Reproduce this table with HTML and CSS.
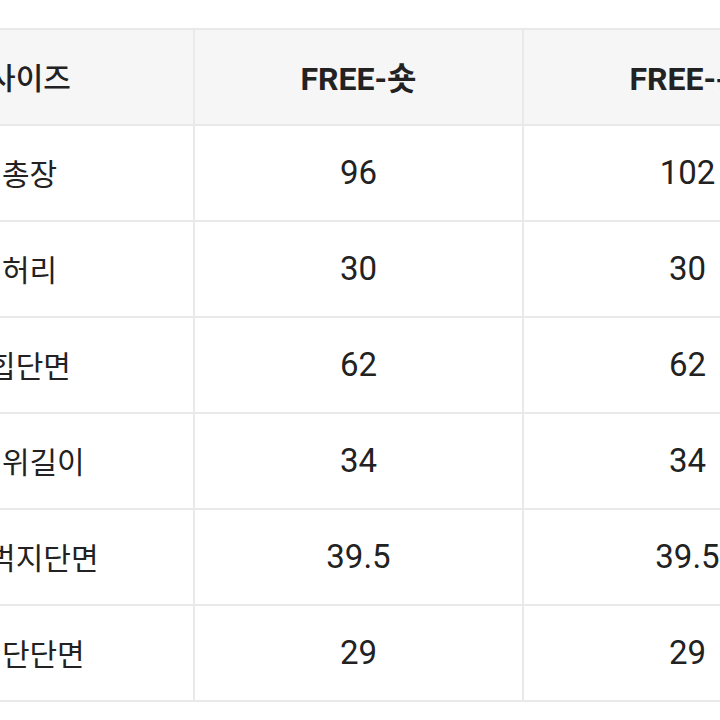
FILE: index.html
```html
<!DOCTYPE html>
<html lang="ko">
<head>
<meta charset="utf-8">
<link rel="stylesheet" href="styles.css">
</head>
<body>
<div class="wrap">
  <div class="grid">
    <div class="cell head label">사이즈</div>
    <div class="cell head">FREE-숏</div>
    <div class="cell head">FREE-롱</div>

    <div class="cell label">총장</div>
    <div class="cell">96</div>
    <div class="cell">102</div>

    <div class="cell label">허리</div>
    <div class="cell">30</div>
    <div class="cell">30</div>

    <div class="cell label">힙단면</div>
    <div class="cell">62</div>
    <div class="cell">62</div>

    <div class="cell label">밑위길이</div>
    <div class="cell">34</div>
    <div class="cell">34</div>

    <div class="cell label">허벅지단면</div>
    <div class="cell">39.5</div>
    <div class="cell">39.5</div>

    <div class="cell label">밑단단면</div>
    <div class="cell">29</div>
    <div class="cell">29</div>
  </div>
</div>
</body>
</html>
```

FILE: styles.css
```css
html, body {
  margin: 0;
  padding: 0;
  background: #ffffff;
  overflow: hidden;
  width: 720px;
  height: 720px;
}

.wrap {
  padding-top: 28px;
  margin-left: -136px;
  width: 1000px;
}

.grid {
  display: grid;
  grid-template-columns: 327px 327px 327px;
  grid-auto-rows: 94px;
  gap: 2px;
  padding: 2px;
  background: #e9e9e9;
  width: max-content;
  font-family: Roboto, "Noto Sans CJK KR", sans-serif;
  color: #222222;
}

.cell {
  background: #ffffff;
  display: flex;
  align-items: center;
  justify-content: center;
  font-size: 33px;
  white-space: nowrap;
  padding-bottom: 2px;
  box-sizing: border-box;
}

.head {
  background: #f6f6f6;
  font-weight: 700;
  font-size: 32px;
}

.label {
  font-size: 30px;
  font-weight: 400;
}

.head.label {
  font-weight: 500;
}
```
